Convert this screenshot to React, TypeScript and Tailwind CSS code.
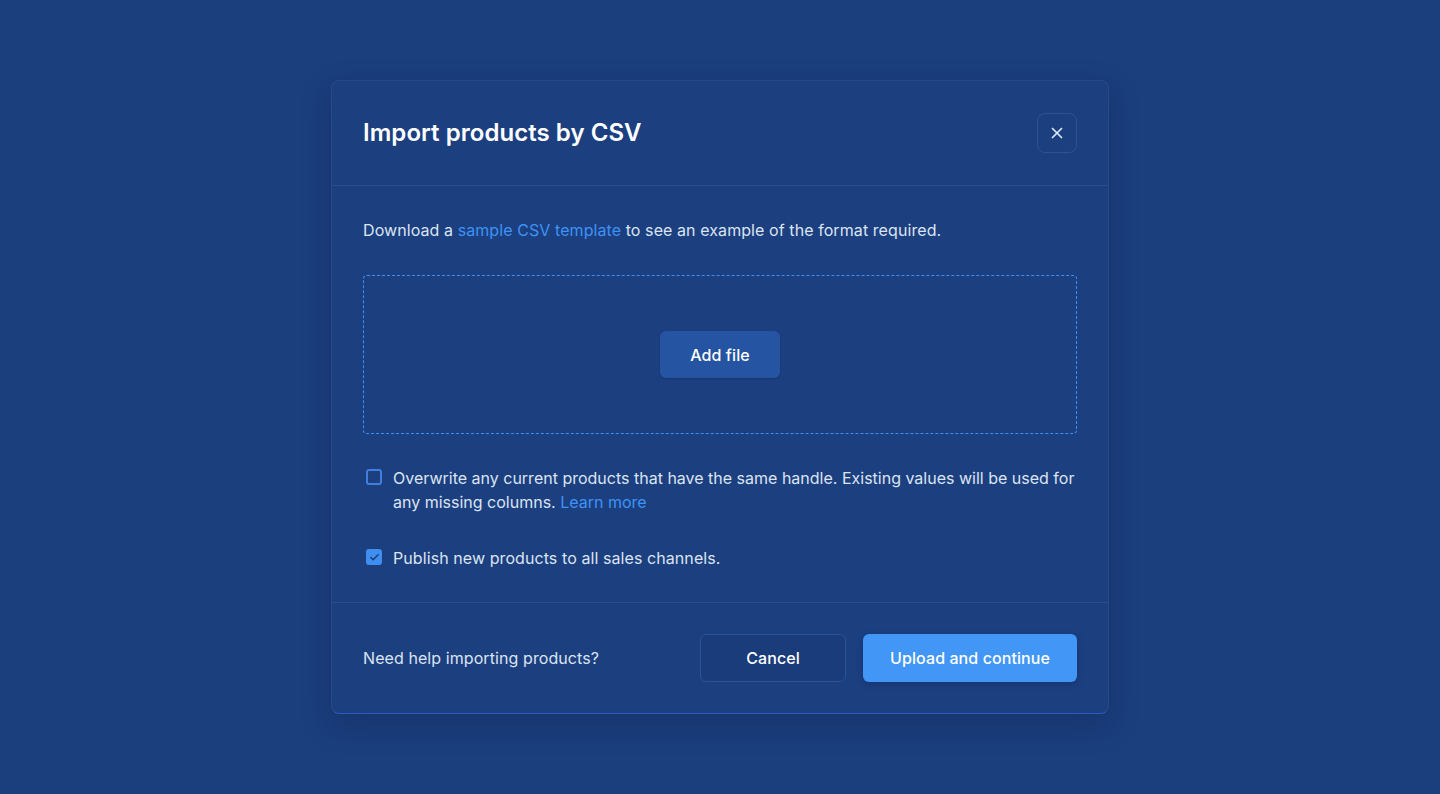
import { X, Check } from 'lucide-react';

export default function App() {
  return (
    <div
      className="min-h-screen w-full bg-[#1b3e7d] flex justify-center pt-20"
      style={{ fontFamily: 'Inter, "Noto Sans", sans-serif' }}
    >
      <div className="w-[778px] h-[634px] rounded-lg bg-[#1c3f7f] border border-[#26498a] border-b-[#2b5cc0] shadow-[0_10px_30px_rgba(10,25,60,0.25)] flex flex-col">
        {/* header */}
        <div className="flex items-center justify-between px-[31px] py-8 border-b border-[#2a4e90]">
          <h2 className="text-[24px] leading-8 font-semibold text-white tracking-[0.05px]">
            Import products by CSV
          </h2>
          <button className="w-10 h-10 rounded-lg border border-[#2c5298] flex items-center justify-center text-[#dbe7ff]">
            <X size={18} strokeWidth={2.25} />
          </button>
        </div>

        {/* body */}
        <div className="px-[31px] pt-8 pb-8 border-b border-[#2a4e90] tracking-[0.08px]">
          <p className="text-[16px] leading-6 text-[#dbe4f3]">
            Download a <a className="text-[#3e93f5]">sample CSV template</a> to see an example of
            the format required.
          </p>

          <div className="mt-[33px] h-[159px] rounded-sm border border-dashed border-[#3f8ef0] flex items-center justify-center">
            <button className="w-[120px] h-[47px] rounded-md bg-[#2554a2] text-white text-[16px] font-medium shadow-[0_1px_2px_rgba(0,0,0,0.15)]">
              Add file
            </button>
          </div>

          <label className="mt-8 flex gap-[11px] items-start">
            <span className="mt-[3px] ml-[3px] w-4 h-4 shrink-0 rounded-[3px] border-2 border-[#3f7fe0]" />
            <span className="-mr-2 text-[16px] leading-6 text-[#dbe4f3] tracking-normal">
              Overwrite any current products that have the same handle. Existing values will be used
              for any missing columns. <a className="text-[#3e93f5]">Learn more</a>
            </span>
          </label>

          <label className="mt-8 flex gap-[11px] items-start">
            <span className="mt-[3px] ml-[3px] w-4 h-4 shrink-0 rounded-[3px] bg-[#3f8ef0] flex items-center justify-center text-[#1c3f7f]">
              <Check size={11} strokeWidth={3.5} />
            </span>
            <span className="text-[16px] leading-6 text-[#dbe4f3]">
              Publish new products to all sales channels.
            </span>
          </label>
        </div>

        {/* footer */}
        <div className="flex-1 flex items-center justify-between px-[31px] tracking-[0.08px]">
          <span className="text-[16px] leading-6 text-[#dbe4f3]">Need help importing products?</span>
          <div className="flex gap-[17px]">
            <button className="w-[146px] h-12 rounded-md border border-[#2c5298] bg-[#1b3c7a] text-white text-[16px] font-medium">
              Cancel
            </button>
            <button className="w-[214px] h-12 rounded-md bg-[#4196f6] text-white text-[16px] font-medium shadow-[0_2px_6px_rgba(10,30,80,0.3)]">
              Upload and continue
            </button>
          </div>
        </div>
      </div>
    </div>
  );
}
